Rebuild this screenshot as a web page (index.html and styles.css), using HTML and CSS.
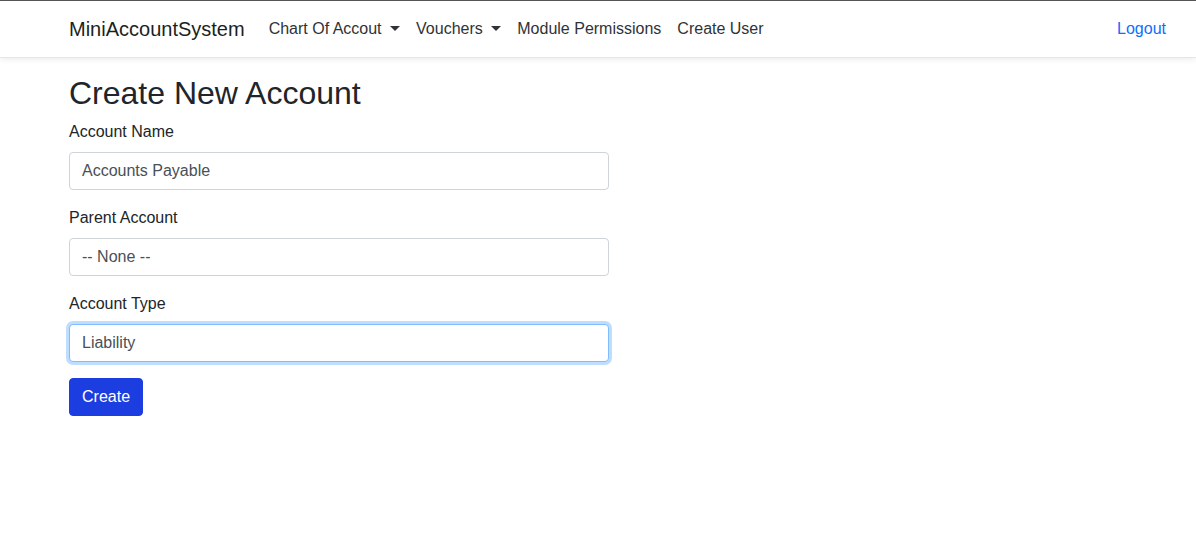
FILE: index.html
```html
<!DOCTYPE html>
<html lang="en">
<head>
<meta charset="utf-8">
<title>Create New Account - MiniAccountSystem</title>
<link rel="stylesheet" href="styles.css">
</head>
<body>
<header class="navbar">
  <div class="nav-inner">
    <a class="brand" href="#">MiniAccountSystem</a>
    <ul class="nav-links">
      <li><a class="nav-link dropdown" href="#">Chart Of Accout</a></li>
      <li><a class="nav-link dropdown" href="#">Vouchers</a></li>
      <li><a class="nav-link" href="#">Module Permissions</a></li>
      <li><a class="nav-link" href="#">Create User</a></li>
    </ul>
    <a class="nav-link logout" href="#">Logout</a>
  </div>
</header>
<main class="container">
  <h2 class="title">Create New Account</h2>
  <form class="form">
    <div class="group">
      <label class="label" for="name">Account Name</label>
      <input class="control" id="name" type="text" value="Accounts Payable">
    </div>
    <div class="group">
      <label class="label" for="parent">Parent Account</label>
      <select class="control" id="parent"><option>-- None --</option></select>
    </div>
    <div class="group">
      <label class="label" for="type">Account Type</label>
      <select class="control focused" id="type"><option>Liability</option></select>
    </div>
    <button class="btn" type="button">Create</button>
  </form>
</main>
</body>
</html>
```
FILE: styles.css
```css
* { box-sizing: border-box; }
html, body { margin: 0; padding: 0; }
body {
  font-family: "Liberation Sans", Arial, sans-serif;
  font-size: 16px;
  line-height: 1.5;
  color: #212529;
  background: #fff;
}
.navbar {
  border-top: 1px solid #555;
  border-bottom: 1px solid #e4e6e8;
  box-shadow: 0 2px 6px rgba(0,0,0,0.07);
  background: #fff;
  padding: 8px 0;
}
.nav-inner {
  display: flex;
  align-items: center;
  padding: 0 30px 0 69px;
}
.brand {
  font-size: 20px;
  line-height: 30px;
  padding: 5px 0;
  margin-right: 16px;
  color: #1c1f22;
  text-decoration: none;
}
.nav-links {
  display: flex;
  list-style: none;
  margin: 0;
  padding: 0;
  flex: 1;
}
.nav-link {
  display: block;
  padding: 8px;
  color: #2f3337;
  text-decoration: none;
  line-height: 24px;
}
.dropdown::after {
  content: "";
  display: inline-block;
  margin-left: 8.5px;
  vertical-align: 3px;
  border-top: 5.5px solid;
  border-right: 5.5px solid transparent;
  border-left: 5.5px solid transparent;
}
.logout {
  color: #0d6efd;
  padding-right: 0;
}
.container {
  padding: 16px 69px;
}
.title {
  font-size: 32px;
  font-weight: 500;
  line-height: 1.2;
  margin: 0 0 8px;
}
.form { width: 540px; }
.group { margin-bottom: 16px; }
.label {
  display: block;
  margin-bottom: 8px;
}
.control {
  display: block;
  width: 100%;
  height: 38px;
  padding: 6px 12px;
  font-family: inherit;
  font-size: 16px;
  line-height: 24px;
  color: #495057;
  background: #fff;
  border: 1px solid #ced4da;
  border-radius: 4px;
  appearance: none;
  -webkit-appearance: none;
  outline: none;
}
.focused {
  border-color: #80bdff;
  box-shadow: 0 0 0 3px rgba(0,123,255,0.25);
}
.btn {
  font-family: inherit;
  font-size: 16px;
  line-height: 24px;
  padding: 6px 12px;
  color: #fff;
  background: #1c3de0;
  border: 1px solid #1c3de0;
  border-radius: 4px;
}
```
